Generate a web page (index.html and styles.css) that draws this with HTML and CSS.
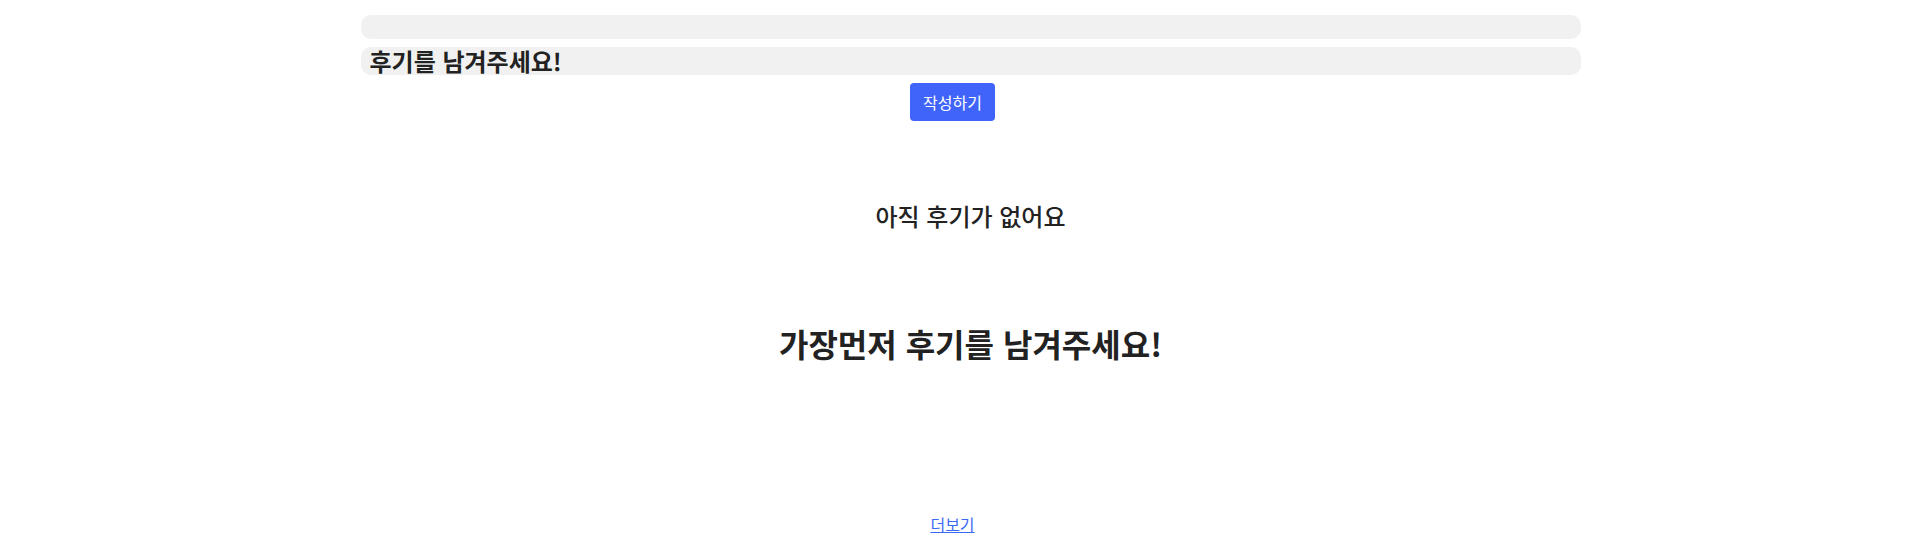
FILE: index.html
```html
<!DOCTYPE html>
<html lang="ko">
<head>
<meta charset="utf-8">
<title>후기</title>
<link rel="stylesheet" href="styles.css">
</head>
<body>
<div class="page">
  <section class="review-box">
    <div class="bar bar-empty"></div>
    <div class="bar bar-title">후기를 남겨주세요!</div>
  </section>
  <div class="actions">
    <button class="write-btn" type="button">작성하기</button>
  </div>
  <section class="review-box empty">
    <h3 class="empty-sub">아직 후기가 없어요</h3>
    <h2 class="empty-main">가장먼저 후기를 남겨주세요!</h2>
  </section>
  <div class="more">
    <a class="more-link" href="#">더보기</a>
  </div>
</div>
</body>
</html>
```

FILE: styles.css
```css
html, body {
  margin: 0;
  padding: 0;
  background: #ffffff;
}

body {
  font-family: "Noto Sans CJK KR", "Noto Sans", sans-serif;
  color: #222222;
}

.page {
  padding-top: 15px;
}

.review-box {
  width: 1220px;
  margin-left: calc(50% - 592px);
}

.bar {
  background: #f1f1f1;
  border-radius: 10px;
}

.bar-empty {
  height: 24px;
}

.bar-title {
  margin-top: 8px;
  height: 28px;
  line-height: 28px;
  padding-left: 9px;
  font-size: 24px;
  font-weight: 700;
  color: #222222;
}

.actions {
  display: flex;
  justify-content: center;
  margin-top: 8px;
}

.write-btn {
  font-family: inherit;
  font-size: 16px;
  line-height: 22px;
  color: #ffffff;
  background: #4064fa;
  border: none;
  border-radius: 4px;
  padding: 8px 13px;
  cursor: pointer;
}

.empty {
  text-align: center;
}

.empty-sub {
  margin: 77px 0 0;
  font-size: 24px;
  line-height: 35px;
  font-weight: 500;
  color: #222222;
}

.empty-main {
  margin: 87px 0 0;
  font-size: 32px;
  line-height: 46px;
  font-weight: 700;
  color: #222222;
}

.more {
  display: flex;
  justify-content: center;
  margin-top: 147px;
}

.more-link {
  font-size: 16px;
  line-height: 23px;
  color: #3d6af5;
  text-decoration: underline;
}
```
